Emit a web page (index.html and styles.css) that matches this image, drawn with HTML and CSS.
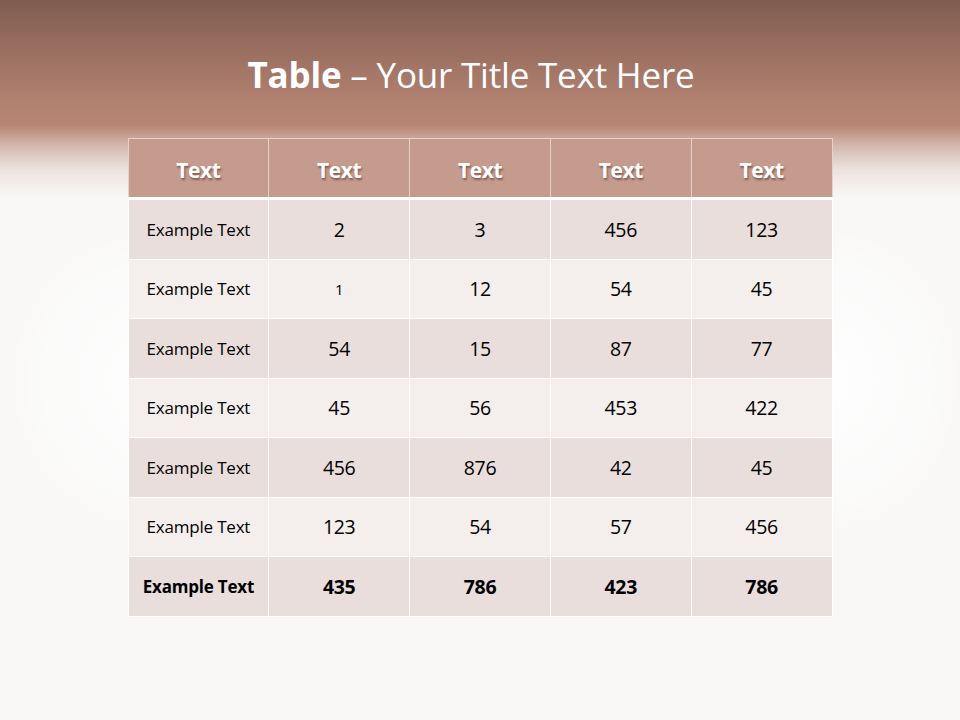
FILE: index.html
```html
<!DOCTYPE html>
<html>
<head>
<meta charset="utf-8">
<link rel="stylesheet" href="styles.css">
</head>
<body>
<div class="slide">
  <div class="band"></div>
  <div class="glow glow-left"></div>
  <div class="glow glow-right"></div>
  <h1 class="title"><b>Table</b> – Your Title Text Here</h1>
  <table class="grid">
    <thead>
      <tr><th>Text</th><th>Text</th><th>Text</th><th>Text</th><th>Text</th></tr>
    </thead>
    <tbody>
      <tr class="odd"><td class="lbl">Example Text</td><td>2</td><td>3</td><td>456</td><td>123</td></tr>
      <tr class="even"><td class="lbl">Example Text</td><td class="small">1</td><td>12</td><td>54</td><td>45</td></tr>
      <tr class="odd"><td class="lbl">Example Text</td><td>54</td><td>15</td><td>87</td><td>77</td></tr>
      <tr class="even"><td class="lbl">Example Text</td><td>45</td><td>56</td><td>453</td><td>422</td></tr>
      <tr class="odd"><td class="lbl">Example Text</td><td>456</td><td>876</td><td>42</td><td>45</td></tr>
      <tr class="even"><td class="lbl">Example Text</td><td>123</td><td>54</td><td>57</td><td>456</td></tr>
      <tr class="odd total"><td class="lbl">Example Text</td><td>435</td><td>786</td><td>423</td><td>786</td></tr>
    </tbody>
  </table>
</div>
</body>
</html>
```

FILE: styles.css
```css
html, body {
  margin: 0;
  padding: 0;
}
body {
  width: 960px;
  height: 720px;
  overflow: hidden;
  font-family: "Open Sans", "Noto Sans", sans-serif;
}
.slide {
  position: relative;
  width: 960px;
  height: 720px;
  background: #f9f8f7;
  display: flex;
  flex-direction: column;
  align-items: center;
}
.band {
  position: absolute;
  left: 0;
  top: 0;
  width: 960px;
  height: 200px;
  background: linear-gradient(to bottom, #7e5c4f 0px, #9a6f60 50px, #b08070 100px, #b88573 125px, #d2b7ad 145px, #ede3df 170px, #f9f8f7 198px);
}
.glow {
  position: absolute;
  border-radius: 50%;
  background: radial-gradient(ellipse at center, rgba(255,255,255,0.9) 0%, rgba(255,255,255,0.4) 55%, rgba(255,255,255,0) 72%);
}
.glow-left {
  left: 10px;
  top: 230px;
  width: 300px;
  height: 300px;
}
.glow-right {
  left: 700px;
  top: 230px;
  width: 260px;
  height: 300px;
}
.title {
  position: relative;
  margin: 50px 18px 0 0;
  height: 50px;
  font-size: 35px;
  line-height: 50px;
  font-weight: 400;
  color: #ffffff;
  letter-spacing: -0.2px;
}
.title b {
  font-weight: 700;
}
.grid {
  position: relative;
  margin-top: 38px;
  border-collapse: collapse;
  width: 705px;
  table-layout: fixed;
  border: 1px solid #ffffff;
}
.grid th, .grid td {
  border: 1px solid #ffffff;
  text-align: center;
  padding: 0;
  color: #000000;
}
.grid th {
  box-sizing: border-box;
  height: 60px;
  padding-top: 4px;
  background: #c49b8d;
  color: #ffffff;
  font-size: 21px;
  font-weight: 700;
  letter-spacing: -0.4px;
  text-shadow: 1px 2px 2px rgba(80, 40, 30, 0.55);
  border-color: #e6d2cb #e6d2cb #ffffff #e6d2cb;
  border-bottom-width: 3px;
}
.grid td {
  height: 58.5px;
  font-size: 19.5px;
  letter-spacing: -0.3px;
}
.grid td.lbl {
  font-size: 17px;
  letter-spacing: -0.2px;
}
.grid td.small {
  font-size: 15px;
}
.odd td {
  background: #e9dedb;
}
.even td {
  background: #f4efed;
}
.total td {
  font-weight: 700;
}
```
